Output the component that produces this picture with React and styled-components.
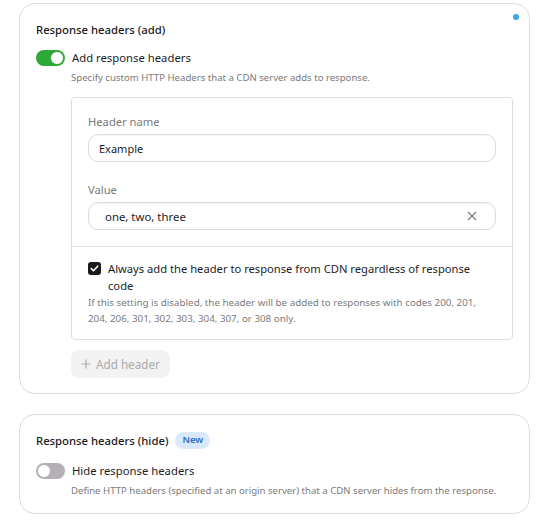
import React from 'react'
import styled, { createGlobalStyle } from 'styled-components'

const GlobalStyle = createGlobalStyle`
  body {
    margin: 0;
    background: #fff;
    font-family: "Noto Sans", "Open Sans", sans-serif;
    color: #1d1d1f;
  }
`

const Page = styled.div`
  width: 548px;
  padding: 3px 18px 0 19px;
  box-sizing: border-box;
  display: flex;
  flex-direction: column;
  gap: 20px;
`

const Card = styled.section`
  position: relative;
  border: 1px solid #dcdcdc;
  border-radius: 16px;
  padding: ${p => p.$pad || '16px'};
`

const Dot = styled.span`
  position: absolute;
  top: 10px;
  right: 10px;
  width: 6px;
  height: 6px;
  border-radius: 50%;
  background: #3ba3ea;
`

const TitleRow = styled.div`
  display: flex;
  align-items: center;
  gap: 7px;
  height: 18px;
`

const Title = styled.h3`
  margin: 0;
  font-size: 11.3px;
  font-weight: 500;
  color: #1a1a1a;
`

const Badge = styled.span`
  background: #d9e9fb;
  color: #2c6fb8;
  font-size: 9.5px;
  font-weight: 600;
  border-radius: 9px;
  padding: 1px 7px 2px;
  line-height: 14px;
`

const SwitchRow = styled.div`
  display: flex;
  align-items: center;
  gap: 7px;
  margin-top: ${p => p.$mt || '12px'};
`

const Track = styled.span`
  position: relative;
  width: 29px;
  height: 16px;
  border-radius: 8px;
  background: ${p => (p.$on ? '#2ea836' : '#b4aeb6')};
  flex-shrink: 0;
`

const Knob = styled.span`
  position: absolute;
  top: 1px;
  left: ${p => (p.$on ? '14px' : '1px')};
  width: 14px;
  height: 14px;
  border-radius: 50%;
  background: #fff;
  box-sizing: border-box;
  border: 1px solid ${p => (p.$on ? '#2ea836' : '#b4aeb6')};
`

const SwitchLabel = styled.span`
  font-size: 11.3px;
  line-height: 16px;
  color: #1d1d1f;
`

const Hint = styled.p`
  margin: ${p => p.$m || '4px 0 0 35px'};
  font-size: ${p => p.$fs || '9.6px'};
  line-height: 16px;
  color: #7a7a7a;
`

const Group = styled.div`
  margin: 11px 0 0 35px;
  border: 1px solid #dedede;
  border-radius: 4px;
`

const Fields = styled.div`
  padding: 16px 16px 16px 16px;
  border-bottom: 1px solid #e6e6e6;
`

const FieldLabel = styled.label`
  display: block;
  font-size: 11.2px;
  color: #7a7a7a;
  line-height: 16px;
  margin-top: ${p => p.$mt || '0'};
`

const Input = styled.div`
  display: flex;
  align-items: center;
  justify-content: space-between;
  margin-top: 4px;
  height: 28px;
  box-sizing: border-box;
  border: 1px solid #dcdcdc;
  border-radius: 10px;
  padding: 0 18px 0 ${p => p.$pl || '10px'};
  font-size: ${p => p.$fs || '11px'};
  color: #1d1d1f;
  box-shadow: inset 0 1px 1px rgba(0, 0, 0, 0.04);
`

const CheckBlock = styled.div`
  padding: 13px 16px 12px 16px;
`

const CheckRow = styled.div`
  display: flex;
  align-items: flex-start;
  gap: 7px;
`

const Box = styled.span`
  width: 13px;
  height: 13px;
  border-radius: 3px;
  background: #1a1a1a;
  display: flex;
  align-items: center;
  justify-content: center;
  margin-top: 2px;
  flex-shrink: 0;
`

const CheckText = styled.span`
  font-size: 11.2px;
  line-height: 17px;
  color: #1d1d1f;
`

const AddButton = styled.button`
  margin: 10px 0 0 35px;
  display: flex;
  align-items: center;
  gap: 5px;
  height: 28px;
  padding: 0 10px 0 10px;
  border: none;
  border-radius: 8px;
  background: #f2f2f2;
  color: #ababab;
  font-family: inherit;
  font-size: 11.7px;
`

const Cross = () => (
  <svg width="10" height="10" viewBox="0 0 10 10">
    <path d="M1 1L9 9M9 1L1 9" stroke="#777" strokeWidth="1.1" />
  </svg>
)

const Tick = () => (
  <svg width="9" height="9" viewBox="0 0 9 9">
    <path d="M1.3 4.6L3.5 6.8L7.7 2.2" stroke="#fff" strokeWidth="1.6" fill="none" strokeLinecap="round" strokeLinejoin="round" />
  </svg>
)

const Plus = () => (
  <svg width="10" height="10" viewBox="0 0 10 10">
    <path d="M5 0.5V9.5M0.5 5H9.5" stroke="#ababab" strokeWidth="1.2" />
  </svg>
)

const Switch = ({ on, mt, children }) => (
  <SwitchRow $mt={mt}>
    <Track $on={on}><Knob $on={on} /></Track>
    <SwitchLabel>{children}</SwitchLabel>
  </SwitchRow>
)

export default function App() {
  return (
    <>
      <GlobalStyle />
      <Page>
        <Card $pad="16px 16px 15px 16px">
          <Dot />
          <TitleRow><Title>Response headers (add)</Title></TitleRow>
          <Switch on>Add response headers</Switch>
          <Hint>Specify custom HTTP Headers that a CDN server adds to response.</Hint>
          <Group>
            <Fields>
              <FieldLabel>Header name</FieldLabel>
              <Input>Example</Input>
              <FieldLabel $mt="20px">Value</FieldLabel>
              <Input $pl="16px" $fs="11.4px">one, two, three<Cross /></Input>
            </Fields>
            <CheckBlock>
              <CheckRow>
                <Box><Tick /></Box>
                <CheckText>Always add the header to response from CDN regardless of response code</CheckText>
              </CheckRow>
              <Hint $m="1px 0 0 0" $fs="9.8px">
                If this setting is disabled, the header will be added to responses with codes 200, 201, 204, 206, 301, 302, 303, 304, 307, or 308 only.
              </Hint>
            </CheckBlock>
          </Group>
          <AddButton><Plus />Add header</AddButton>
        </Card>
        <Card $pad="16px 16px 14px 16px">
          <TitleRow>
            <Title>Response headers (hide)</Title>
            <Badge>New</Badge>
          </TitleRow>
          <Switch mt="14px">Hide response headers</Switch>
          <Hint>Define HTTP headers (specified at an origin server) that a CDN server hides from the response.</Hint>
        </Card>
      </Page>
    </>
  )
}
